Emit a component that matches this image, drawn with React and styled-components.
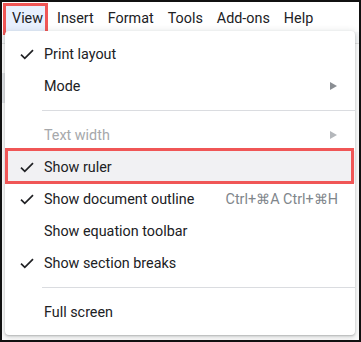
import React from "react";
import styled, { createGlobalStyle, css } from "styled-components";

const GlobalStyle = createGlobalStyle`
  html, body { margin: 0; padding: 0; background: #fff; }
  body { font-family: Roboto, "Liberation Sans", Arial, sans-serif; }
`;

const Frame = styled.div`
  position: relative;
  width: 361px;
  height: 342px;
  box-sizing: border-box;
  border: 2px solid #111;
  background: #fff;
  overflow: hidden;
`;

const MenuBar = styled.div`
  display: flex;
  padding: 2px 0 0 3px;
  height: 28px;
`;

const BarItem = styled.div`
  position: relative;
  isolation: isolate;
  padding: 0 7px;
  height: 28px;
  line-height: 29px;
  font-size: 14.35px;
  color: #202124;
  ${(p) =>
    p.$active &&
    css`
      &::before {
        content: "";
        position: absolute;
        top: 1px;
        left: 1px;
        right: 5px;
        bottom: -1px;
        background: #e8f0fe;
        z-index: -1;
      }
      &::after {
        content: "";
        position: absolute;
        top: -1px;
        left: -2px;
        right: 2px;
        bottom: -3px;
        border: 3px solid #f05656;
        z-index: 5;
      }
    `}
`;

const ToolStrip = styled.div`
  height: 11px;
  border-bottom: 1px solid #e3e3e3;
  background: #f8f9fa;
`;

const SideBlock = styled.div`
  margin-top: 29px;
  width: 3px;
  height: 30px;
  background: #e4e6e9;
`;

const Dropdown = styled.div`
  position: absolute;
  top: 29px;
  left: 3px;
  width: 350px;
  padding: 7px 0;
  background: #fff;
  border-radius: 4px;
  box-shadow: 0 2px 6px 2px rgba(60, 64, 67, 0.15),
    0 1px 2px rgba(60, 64, 67, 0.3);
  z-index: 2;
`;

const Row = styled.div`
  position: relative;
  display: flex;
  align-items: center;
  height: 32px;
  padding: 0 17px 0 15px;
  font-size: 14.35px;
  color: ${(p) => (p.$disabled ? "#a6a8ab" : "#202124")};
  ${(p) =>
    p.$highlight &&
    css`
      background: #f1f1f3;
      &::after {
        content: "";
        position: absolute;
        top: -3px;
        left: 0;
        right: 1px;
        bottom: -1px;
        border: 3px solid #f05656;
      }
    `}
`;

const CheckSlot = styled.span`
  display: flex;
  align-items: center;
  width: 24px;
  flex: none;
`;

const Label = styled.span`
  flex: 1;
  white-space: nowrap;
`;

const Shortcut = styled.span`
  color: #80868b;
  font-size: 14.4px;
  white-space: nowrap;
`;

const Arrow = styled.span`
  width: 0;
  height: 0;
  margin-right: 1px;
  border-top: 4px solid transparent;
  border-bottom: 4px solid transparent;
  border-left: 7px solid ${(p) => (p.$disabled ? "#b4b7bb" : "#8a8e93")};
`;

const Separator = styled.div`
  height: 1px;
  background: #dadce0;
  margin: 8px 0 8px 37px;
`;

const Check = () => (
  <svg width="14" height="11" viewBox="0 0 14 11">
    <path
      d="M1 5.6 L4.8 9.4 L13 1.2"
      fill="none"
      stroke="#202124"
      strokeWidth="1.7"
    />
  </svg>
);

const items = [
  { label: "Print layout", checked: true },
  { label: "Mode", arrow: true },
  { sep: true },
  { label: "Text width", arrow: true, disabled: true },
  { label: "Show ruler", checked: true, highlight: true },
  {
    label: "Show document outline",
    checked: true,
    shortcut: "Ctrl+⌘A Ctrl+⌘H",
  },
  { label: "Show equation toolbar" },
  { label: "Show section breaks", checked: true },
  { sep: true },
  { label: "Full screen" },
];

const barItems = ["View", "Insert", "Format", "Tools", "Add-ons", "Help"];

export default function App() {
  return (
    <>
      <GlobalStyle />
      <Frame>
        <MenuBar>
          {barItems.map((b, i) => (
            <BarItem key={b} $active={i === 0}>
              {b}
            </BarItem>
          ))}
        </MenuBar>
        <ToolStrip />
        <SideBlock />
        <Dropdown>
          {items.map((it, i) =>
            it.sep ? (
              <Separator key={i} />
            ) : (
              <Row key={i} $disabled={it.disabled} $highlight={it.highlight}>
                <CheckSlot>{it.checked && <Check />}</CheckSlot>
                <Label>{it.label}</Label>
                {it.shortcut && <Shortcut>{it.shortcut}</Shortcut>}
                {it.arrow && <Arrow $disabled={it.disabled} />}
              </Row>
            )
          )}
        </Dropdown>
      </Frame>
    </>
  );
}
